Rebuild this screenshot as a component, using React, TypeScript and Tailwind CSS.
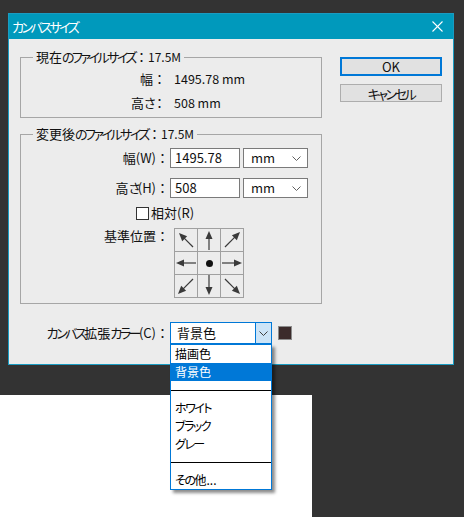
import React from "react";

type P = [number, number];

function Arrow({ tail, tip }: { tail: P; tip: P }) {
  const dx = tip[0] - tail[0];
  const dy = tip[1] - tail[1];
  const len = Math.hypot(dx, dy);
  const ux = dx / len;
  const uy = dy / len;
  const hl = 8;
  const hw = 3.5;
  const bx = tip[0] - ux * hl;
  const by = tip[1] - uy * hl;
  const px = -uy;
  const py = ux;
  const pts = `${tip[0]},${tip[1]} ${bx + px * hw},${by + py * hw} ${bx - px * hw},${by - py * hw}`;
  return (
    <svg width="22" height="22" viewBox="0 0 22 22">
      <line x1={tail[0]} y1={tail[1]} x2={bx + ux} y2={by + uy} stroke="#3a3a3a" strokeWidth="1.2" />
      <polygon points={pts} fill="#3a3a3a" />
    </svg>
  );
}

const cells: ({ tail: P; tip: P } | null)[] = [
  { tail: [18, 18], tip: [4, 4] },
  { tail: [11, 21], tip: [11, 2] },
  { tail: [4, 18], tip: [19, 3] },
  { tail: [21, 11], tip: [1, 11] },
  null,
  { tail: [1, 11], tip: [21, 11] },
  { tail: [18, 4], tip: [3, 19] },
  { tail: [11, 0], tip: [11, 20] },
  { tail: [4, 4], tip: [19, 19] },
];

function Chevron({ color = "#606060" }: { color?: string }) {
  return (
    <svg width="9" height="5" viewBox="0 0 9 5">
      <polyline points="0.5,0.5 4.5,4.5 8.5,0.5" fill="none" stroke={color} strokeWidth="1" />
    </svg>
  );
}

/* Japanese UI text: narrow kana (like Meiryo UI) and a full-width colon */
function T({ s, small = false }: { s: string; small?: boolean }) {
  return (
    <>
      {Array.from(s).map((c, i) => {
        if (c === "：") {
          return (
            <span key={i} className="inline-block w-[13px] text-center">
              ：
            </span>
          );
        }
        if (/[\u3040-\u30ff]/.test(c)) {
          return (
            <span key={i} className={small ? "tracking-[-1.5px]" : "tracking-[-2.5px]"}>
              {c}
            </span>
          );
        }
        return <React.Fragment key={i}>{c}</React.Fragment>;
      })}
    </>
  );
}

export default function App() {
  return (
    <div className="w-[464px] h-[517px] bg-[#333333] overflow-hidden relative font-['Noto_Sans_CJK_JP',sans-serif] [font-feature-settings:'palt'] text-[13px] text-[#111]">
      {/* Dialog */}
      <div className="ml-[8px] mt-[13px] w-[446px] h-[352px] border border-[#1a9cc2] bg-[#ececec] flex flex-col">
        <div className="h-[25px] bg-[#0099bc] flex items-center justify-between pl-[3px] pr-[10px] text-white">
          <span className="leading-[16px]">
            <T s="カンバスサイズ" />
          </span>
          <svg width="11" height="11" viewBox="0 0 11 11">
            <line x1="0.5" y1="0.5" x2="10.5" y2="10.5" stroke="white" strokeWidth="1.1" />
            <line x1="10.5" y1="0.5" x2="0.5" y2="10.5" stroke="white" strokeWidth="1.1" />
          </svg>
        </div>
        <div className="flex flex-1">
          {/* Left column */}
          <div className="ml-[11px] w-[302px] pt-[10px] flex flex-col">
            <fieldset className="border border-[#a6a6a6] pt-[2px] pb-[2px]">
              <legend className="ml-[12px] px-[3px] h-[16px] leading-[16px]">
                <T s="現在のファイルサイズ：" />
                <span className="text-[12px]">17.5M</span>
              </legend>
              <div className="flex items-center h-[24px]">
                <div className="w-[145px] text-right">
                  <T s="幅：" />
                </div>
                <div className="ml-[8px] text-[12.5px]">1495.78 mm</div>
              </div>
              <div className="flex items-center h-[24px]">
                <div className="w-[145px] text-right">
                  <T s="高さ：" />
                </div>
                <div className="ml-[8px] text-[12.5px]">508 mm</div>
              </div>
            </fieldset>

            <fieldset className="mt-[8px] border border-[#a6a6a6] pt-[6px] pb-[5px]">
              <legend className="ml-[12px] px-[3px] h-[16px] leading-[16px]">
                <T s="変更後のファイルサイズ：" />
                <span className="text-[12px]">17.5M</span>
              </legend>
              <div className="flex items-center h-[20px]">
                <div className="w-[148px] text-right">
                  <T s="幅(W)：" />
                </div>
                <div className="ml-[1px] w-[70px] h-[20px] bg-white border border-[#7a7a7a] flex items-center pl-[4px]">1495.78</div>
                <div className="ml-[3px] w-[65px] h-[20px] bg-white border border-[#7a7a7a] flex items-center justify-between pl-[7px] pr-[6px]">
                  <span>mm</span>
                  <Chevron />
                </div>
              </div>
              <div className="mt-[10px] flex items-center h-[20px]">
                <div className="w-[148px] text-right">
                  <T s="高さ(H)：" />
                </div>
                <div className="ml-[1px] w-[70px] h-[20px] bg-white border border-[#7a7a7a] flex items-center pl-[4px]">508</div>
                <div className="ml-[3px] w-[65px] h-[20px] bg-white border border-[#7a7a7a] flex items-center justify-between pl-[7px] pr-[6px]">
                  <span>mm</span>
                  <Chevron />
                </div>
              </div>
              <div className="mt-[7px] h-[16px] flex items-center pl-[115px]">
                <div className="w-[13px] h-[13px] bg-white border border-[#333]" />
                <span className="ml-[2px] leading-[16px]">相対(R)</span>
              </div>
              <div className="mt-[7px] flex items-start">
                <div className="w-[148px] text-right leading-[16px]">
                  <T s="基準位置：" />
                </div>
                <div className="ml-[5px] grid grid-cols-[22px_22px_22px] grid-rows-[22px_22px_22px] gap-px p-px bg-[#a0a0a0]">
                  {cells.map((c, i) => (
                    <div key={i} className="bg-[#ececec] flex items-center justify-center">
                      {c ? (
                        <Arrow tail={c.tail} tip={c.tip} />
                      ) : (
                        <div className="w-[7px] h-[7px] rounded-full bg-[#111]" />
                      )}
                    </div>
                  ))}
                </div>
              </div>
            </fieldset>

            <div className="mt-[18px] flex items-center h-[22px] pl-[1px]">
              <div className="w-[148px] text-right">
                <T s="カンバス拡張カラー(C)：" />
              </div>
              <div className="ml-[1px] w-[102px] h-[22px] bg-white border border-[#0078d7] flex">
                <div className="flex-1 flex items-center pl-[6px]">背景色</div>
                <div className="w-[16px] bg-[#cce4f7] border-l border-[#0078d7] flex items-center justify-center">
                  <Chevron color="#404040" />
                </div>
              </div>
              <div className="ml-[6px] w-[14px] h-[14px] border border-[#8c8c8c] bg-[#3b2b2b]" />
            </div>
          </div>

          {/* Right column */}
          <div className="ml-[18px] pt-[18px] flex flex-col">
            <button className="w-[102px] h-[19px] border-2 border-[#0078d7] bg-[#e1e1e1] flex items-center justify-center leading-none">OK</button>
            <button className="mt-[8px] w-[102px] h-[18px] border border-[#adadad] bg-[#e1e1e1] flex items-center justify-center leading-none">
              <T s="キャンセル" />
            </button>
          </div>
        </div>
      </div>

      {/* Canvas */}
      <div className="mt-[30px] w-[312px] h-[130px] bg-white" />

      {/* Dropdown list */}
      <div className="absolute left-[170px] top-[344px] w-[102px] border border-[#0078d7] bg-white shadow-[3px_3px_3px_rgba(0,0,0,0.45)] text-[12px]">
        <div className="h-[18px] flex items-center pl-[4px] text-black">描画色</div>
        <div className="h-[18px] flex items-center pl-[4px] bg-[#0078d7] text-white">背景色</div>
        <div className="h-[18px] flex items-center">
          <div className="w-full h-px bg-black" />
        </div>
        <div className="h-[18px] flex items-center pl-[4px] text-black">
          <T s="ホワイト" small />
        </div>
        <div className="h-[18px] flex items-center pl-[4px] text-black">
          <T s="ブラック" small />
        </div>
        <div className="h-[18px] flex items-center pl-[4px] text-black">
          <T s="グレー" small />
        </div>
        <div className="h-[18px] flex items-center">
          <div className="w-full h-px bg-black" />
        </div>
        <div className="h-[18px] flex items-center pl-[4px] text-black">
          <T s="その他..." small />
        </div>
      </div>
    </div>
  );
}
